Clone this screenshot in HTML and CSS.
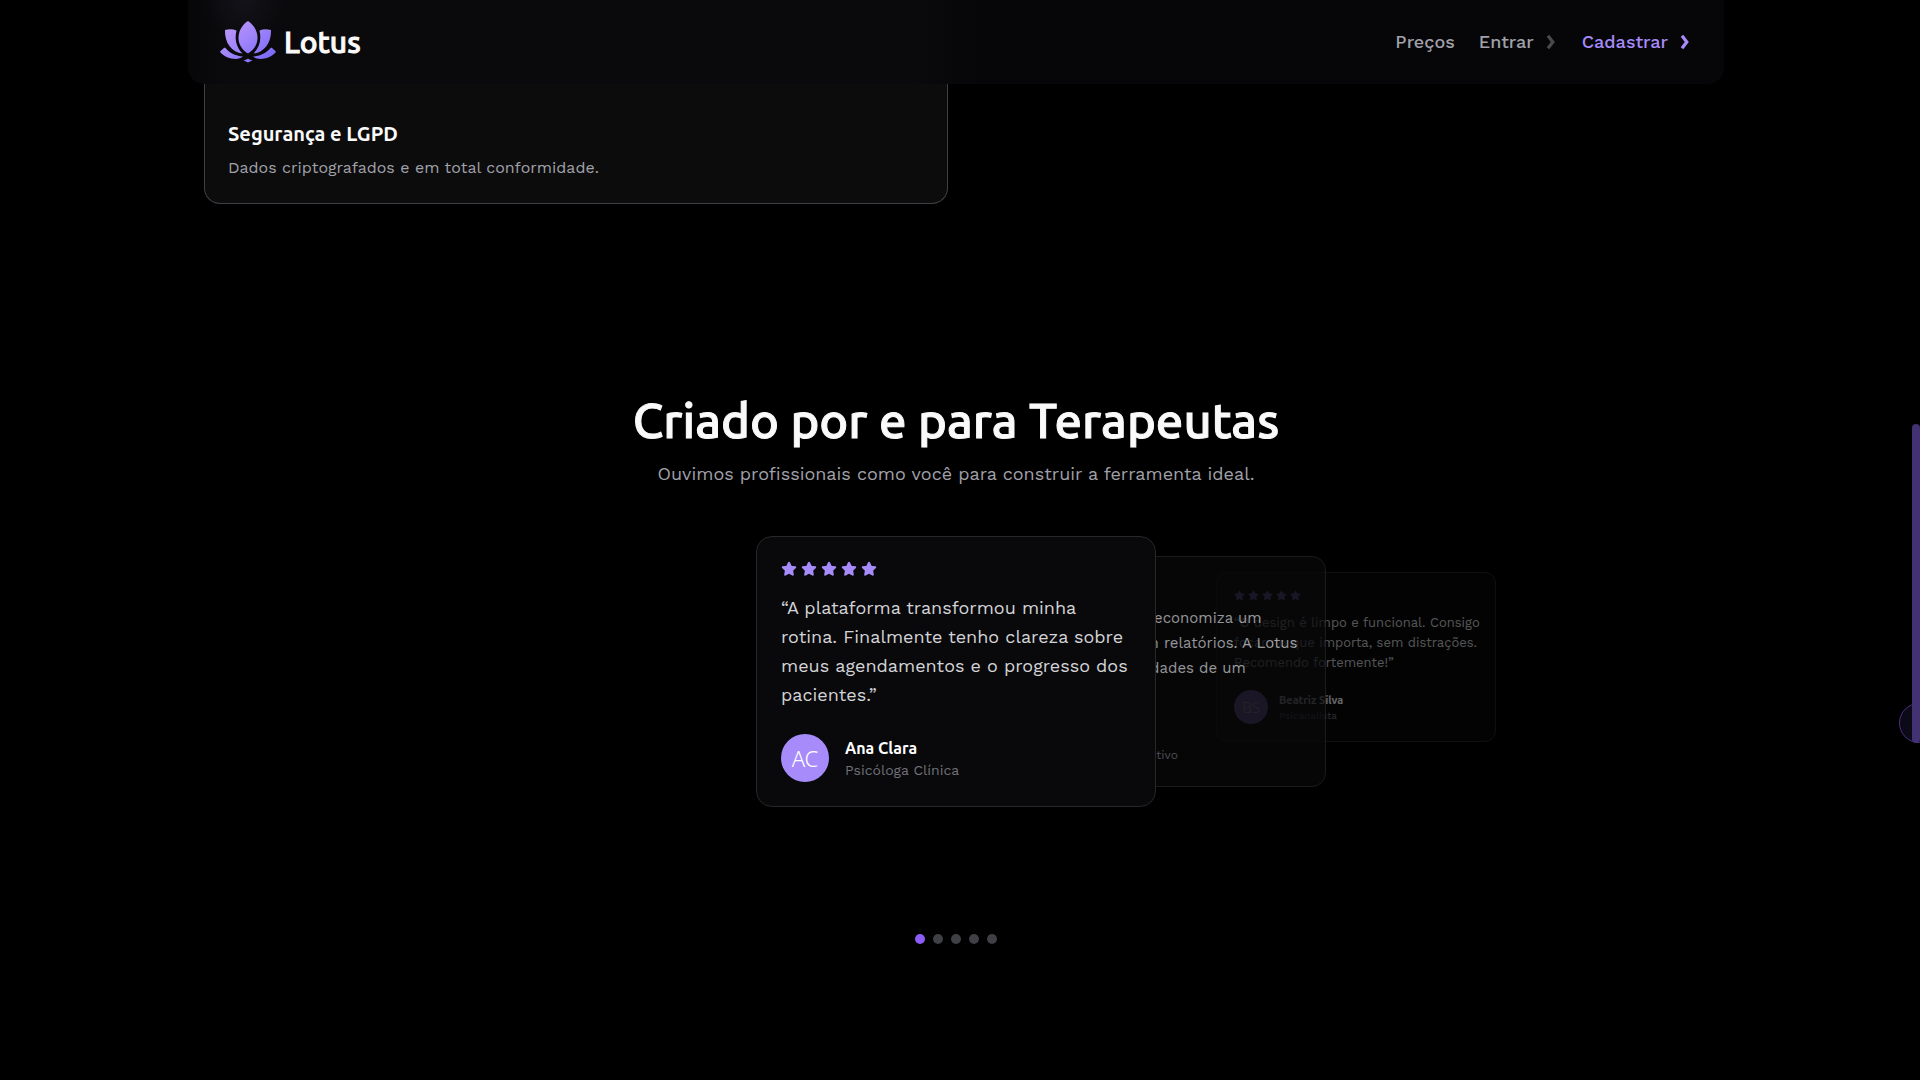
FILE: index.html
```html
<!DOCTYPE html>
<html lang="pt-BR">
<head>
<meta charset="utf-8">
<meta name="viewport" content="width=device-width, initial-scale=1">
<title>Lotus</title>
<link rel="stylesheet" href="styles.css">
</head>
<body>
<svg class="defs" aria-hidden="true">
  <defs>
    <linearGradient id="lotus-fill" gradientUnits="userSpaceOnUse" x1="8" y1="0" x2="42" y2="42">
      <stop offset="0" stop-color="#c09afc"/>
      <stop offset="1" stop-color="#7c6cf8"/>
    </linearGradient>
    <symbol id="star" viewBox="0 0 16 16">
      <path d="M8 1.800 9.900 5.700 14.200 6.300 11.100 9.400 11.800 13.700 8 11.700 4.200 13.700 4.900 9.400 1.800 6.300 6.100 5.700Z" fill="currentColor" stroke="currentColor" stroke-width="2" stroke-linejoin="round"/>
    </symbol>
    <symbol id="chevron" viewBox="0 0 10 16">
      <path d="M2 1.800 6.800 8 2 14.200" fill="none" stroke="currentColor" stroke-width="3.200"/>
    </symbol>
  </defs>
</svg>

<header class="nav">
  <a class="brand" href="#">
    <svg class="brand-mark" viewBox="0 0 56 42" aria-hidden="true">
      <g fill="url(#lotus-fill)">
        <path d="M28 0C33 3 37.500 9.500 37.500 17C37.500 23.500 33.500 29.500 28 32.500C22.500 29.500 18.500 23.500 18.500 17C18.500 9.500 23 3 28 0Z"/>
        <path d="M5 9C9 8 13 8 16.500 9.500C14.500 18 16 26 22.500 32.500C12 31.500 4.500 22 5 9Z"/>
        <path d="M51 9C47 8 43 8 39.500 9.500C41.500 18 40 26 33.500 32.500C44 31.500 51.500 22 51 9Z"/>
        <path d="M5 26.500C9 31.500 15 35 23 35.500C18 40 6 38 0 31C1.500 29 3 27.500 5 26.500Z"/>
        <path d="M51 26.500C47 31.500 41 35 33 35.500C38 40 50 38 56 31C54.500 29 53 27.500 51 26.500Z"/>
        <path d="M28 37.500C29.500 38.500 30.500 39 32.500 39.500C30.500 40 29.500 40.800 28 41.600C26.500 40.800 25.500 40 23.500 39.500C25.500 39 26.500 38.500 28 37.500Z"/>
      </g>
    </svg>
    <span>Lotus</span>
  </a>
  <nav class="links">
    <a href="#">Preços</a>
    <a href="#">Entrar <svg class="chevron muted" aria-hidden="true"><use href="#chevron"/></svg></a>
    <a class="accent" href="#">Cadastrar <svg class="chevron" aria-hidden="true"><use href="#chevron"/></svg></a>
  </nav>
</header>

<main>
  <section class="features">
    <article class="feature">
      <h3>Segurança e LGPD</h3>
      <p>Dados criptografados e em total conformidade.</p>
    </article>
  </section>

  <section class="testimonials">
    <h2>Criado por e para Terapeutas</h2>
    <p class="lead">Ouvimos profissionais como você para construir a ferramenta ideal.</p>

    <div class="stage">
      <article class="card far">
        <div class="stars"><svg><use href="#star"/></svg><svg><use href="#star"/></svg><svg><use href="#star"/></svg><svg><use href="#star"/></svg><svg><use href="#star"/></svg></div>
        <blockquote>“O design é limpo e funcional. Consigo<br>focar no que importa, sem distrações.<br>Recomendo fortemente!”</blockquote>
        <div class="author">
          <span class="avatar">BS</span>
          <div><h4>Beatriz Silva</h4><p>Psicanalista</p></div>
        </div>
      </article>
      <article class="card near">
        <div class="stars"><svg><use href="#star"/></svg><svg><use href="#star"/></svg><svg><use href="#star"/></svg><svg><use href="#star"/></svg><svg><use href="#star"/></svg></div>
        <blockquote>“O resumo, com IA, economiza um<br>tempo precioso com relatórios. A Lotus<br>conhece as necessidades de um<br>terapeuta.”</blockquote>
        <div class="author">
          <span class="avatar">RM</span>
          <div><h4>Ricardo M.</h4><p>Terapeuta Cognitivo</p></div>
        </div>
      </article>
      <article class="card front">
        <div class="stars"><svg><use href="#star"/></svg><svg><use href="#star"/></svg><svg><use href="#star"/></svg><svg><use href="#star"/></svg><svg><use href="#star"/></svg></div>
        <blockquote>“A plataforma transformou minha<br>rotina. Finalmente tenho clareza sobre<br>meus agendamentos e o progresso dos<br>pacientes.”</blockquote>
        <div class="author">
          <span class="avatar">AC</span>
          <div><h4>Ana Clara</h4><p>Psicóloga Clínica</p></div>
        </div>
      </article>
    </div>

    <div class="dots">
      <button class="active" aria-label="Depoimento 1"></button>
      <button aria-label="Depoimento 2"></button>
      <button aria-label="Depoimento 3"></button>
      <button aria-label="Depoimento 4"></button>
      <button aria-label="Depoimento 5"></button>
    </div>
  </section>
</main>

<div class="rail">
  <button class="bubble" aria-label="Abrir painel"></button>
  <div class="thumb"></div>
</div>
</body>
</html>
```
FILE: styles.css
```css
* { box-sizing: border-box; margin: 0; padding: 0; }

html { background: #000; }

body {
  min-height: 100vh;
  padding-right: 8px;
  background: #000;
  color: #fafafa;
  font-family: "Work Sans", Inter, sans-serif;
  font-size: 16px;
  line-height: 24px;
  overflow: hidden;
}

h2, h3, h4, .brand { font-family: Ubuntu, "Noto Sans", sans-serif; }
a { color: inherit; text-decoration: none; }
button { border: 0; cursor: pointer; }
.defs { position: absolute; width: 0; height: 0; }

/* Navigation */
.nav {
  position: sticky;
  top: 0;
  z-index: 10;
  display: flex;
  align-items: center;
  justify-content: space-between;
  max-width: 1536px;
  height: 84px;
  margin: 0 auto;
  padding: 0 32px;
  border-radius: 0 0 16px 16px;
  background:
    radial-gradient(circle at 56px 0, rgba(40, 34, 54, .35), transparent 40px),
    linear-gradient(90deg, #070709 0, #0a0a0c 36px, #0a0a0c 728px, #060608 792px);
}
.brand {
  display: flex;
  align-items: center;
  gap: 8px;
  font-size: 30px;
  font-weight: 500;
  line-height: 36px;
  -webkit-text-stroke: 1px;
}
.brand-mark { width: 56px; height: 42px; }
.links {
  display: flex;
  align-items: center;
  gap: 24px;
  font-size: 18px;
  font-weight: 500;
  line-height: 28px;
  color: #a1a1aa;
}
.links a { display: flex; align-items: center; gap: 12px; }
.links .accent { color: #a78bfa; }
.chevron { width: 10px; height: 16px; margin-right: 2px; }
.muted { color: #4a4a4d; }

/* Feature card */
.features {
  display: grid;
  grid-template-columns: 1fr 1fr;
  gap: 16px;
  max-width: 1504px;
  margin: -84px auto 0;
}
.feature {
  padding: 120px 23px 23px;
  border: 1px solid #3f3f46;
  border-top: 0;
  border-radius: 0 0 16px 16px;
  background: #0c0c0c;
}
.feature h3 { font-size: 20px; font-weight: 700; line-height: 28px; }
.feature p { margin-top: 8px; color: #a1a1aa; }

/* Testimonials */
.testimonials { padding-top: 192px; text-align: center; }
.testimonials h2 { font-size: 49px; font-weight: 500; line-height: 48px; -webkit-text-stroke: 1px; }
.lead { margin-top: 16px; font-size: 18px; line-height: 28px; color: #a1a1aa; }

.stage { position: relative; height: 350px; margin-top: 48px; text-align: left; }
.card {
  position: absolute;
  border: 1px solid #27272a;
  background: #09090b;
}
.stars { display: flex; color: #a78bfa; }
.author { display: flex; align-items: center; }
.avatar {
  display: grid;
  place-items: center;
  border-radius: 50%;
  background: #a78bfa;
  color: #fff;
  font-family: "Noto Sans", sans-serif;
  font-weight: 300;
}
.card blockquote { color: #d4d4d8; white-space: nowrap; }
.card h4 { font-weight: 700; color: #fff; }
.card .author p { color: #71717a; }

.front { top: 0; left: calc(50% - 200px); width: 400px; padding: 24px; border-radius: 16px; }
.front .stars { gap: 4px; }
.front .stars svg { width: 16px; height: 16px; }
.front blockquote { margin-top: 16px; font-size: 18px; line-height: 29px; }
.front .author { gap: 16px; margin-top: 25px; }
.front .avatar { width: 48px; height: 48px; font-size: 22px; }
.front h4 { font-size: 16px; line-height: 24px; }
.front .author p { font-size: 14px; line-height: 20px; }

.near { top: 20px; left: calc(50% + 30px); width: 340px; padding: 20px; border-radius: 14px; opacity: .7; }
.near .stars { gap: 3px; }
.near .stars svg { width: 14px; height: 14px; }
.near blockquote { margin-top: 15px; font-size: 15px; line-height: 25px; }
.near .author { gap: 14px; margin-top: 19px; }
.near .avatar { width: 41px; height: 41px; font-size: 18px; }
.near h4 { font-size: 14px; line-height: 20px; }
.near .author p { font-size: 12px; line-height: 17px; }

.far { top: 36px; left: calc(50% + 260px); width: 280px; padding: 17px; border-radius: 11px; opacity: .4; }
.far .stars { gap: 3px; }
.far .stars svg { width: 11px; height: 11px; }
.far blockquote { margin-top: 12px; font-size: 13px; line-height: 20px; }
.far .author { gap: 11px; margin-top: 17px; }
.far .avatar { width: 34px; height: 34px; font-size: 15px; }
.far h4 { font-size: 11px; line-height: 17px; }
.far .author p { font-size: 10px; line-height: 14px; }

.dots { display: flex; justify-content: center; gap: 8px; margin-top: 48px; }
.dots button { width: 10px; height: 10px; border-radius: 50%; background: #3f3f46; }
.dots .active { background: #8b5cf6; }

/* Scroll rail on the window edge */
.rail { position: fixed; top: 0; right: 0; bottom: 0; width: 8px; }
.thumb { position: absolute; top: 424px; right: 0; width: 8px; height: 319px; border-radius: 4px; background: #423273; }
.bubble {
  position: absolute;
  top: 703px;
  right: -19px;
  width: 40px;
  height: 40px;
  border: 1px solid #4c2f86;
  border-radius: 50%;
  background: #0d0a17;
}
```
